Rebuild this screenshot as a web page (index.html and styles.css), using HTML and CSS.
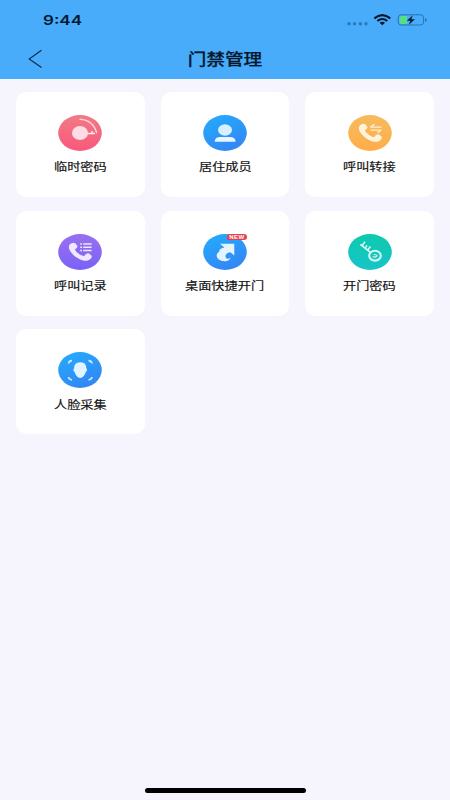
FILE: index.html
```html
<!DOCTYPE html>
<html lang="zh-CN">
<head>
<meta charset="utf-8">
<title>门禁管理</title>
<link rel="stylesheet" href="styles.css">
</head>
<body>
<div class="screen">
  <header class="header">
    <div class="status">
      <span class="time">9:44</span>
      <svg class="indicators" width="84" height="16" viewBox="0 0 84 16">
        <g fill="#2a78bb"><circle cx="4" cy="11.7" r="1.7"/><circle cx="9.6" cy="11.7" r="1.7"/><circle cx="15.4" cy="11.7" r="1.7"/><circle cx="21" cy="11.7" r="1.7"/></g>
        <g fill="none" stroke="#03182e" stroke-width="2.1"><path d="M29.3 6.4Q37.3-.2 45.3 6.4"/><path d="M32.3 9Q37.3 5 42.3 9"/></g>
        <path d="M34.6 10.7Q37.3 8.8 40 10.7L37.3 13.2Z" fill="#03182e"/>
        <rect x="53.2" y="2.8" width="25.4" height="10.2" rx="3" fill="none" stroke="#2874af"/>
        <path d="M56.5 4H62V12H56.5Q54.6 12 54.6 10V6Q54.6 4 56.5 4Z" fill="#55df82"/>
        <path d="M67.8 3.2L61.8 8.8H65.4L63.8 12.8L70 7.2H66.3Z" fill="#03182e"/>
        <path d="M80 6Q83.8 8 80 10Z" fill="#2874af"/>
      </svg>
    </div>
    <div class="navbar">
      <svg class="back" width="15" height="20" viewBox="0 0 15 20"><path d="M13.5 1.3L1.2 10L13.5 18.5" fill="none" stroke="#092b4c" stroke-width="1.1"/></svg>
      <h1 class="title">门禁管理</h1>
    </div>
  </header>
  <main class="grid">
    <section class="card">
      <svg class="icon" viewBox="0 0 44 36">
        <defs><linearGradient id="red" x1="0" y1="0" x2="0" y2="1"><stop offset="0" stop-color="#f27a84"/><stop offset="1" stop-color="#f8597c"/></linearGradient></defs>
        <ellipse cx="22" cy="18" rx="21.8" ry="17.9" fill="url(#red)"/>
        <path d="M22 4.2Q35 5 38.6 17.6" fill="none" stroke="#fbd3d8" stroke-width="1.5" stroke-linecap="round"/>
        <ellipse cx="22" cy="18" rx="8" ry="7" fill="#fbdce4"/>
        <path d="M29.5 18.4H37M34 18V16" stroke="#fff0f2" stroke-width="1.5"/>
      </svg>
      <span class="label">临时密码</span>
    </section>
    <section class="card">
      <svg class="icon" viewBox="0 0 44 36">
        <defs><linearGradient id="blue" x1="0" y1="0" x2=".5" y2="1"><stop offset="0" stop-color="#22adfd"/><stop offset="1" stop-color="#3388f4"/></linearGradient></defs>
        <ellipse cx="22" cy="18" rx="21.8" ry="17.9" fill="url(#blue)"/>
        <ellipse cx="22" cy="15" rx="7" ry="5.8" fill="#d8effe"/>
        <path d="M11.8 26.8C11.8 23.4 14 22 18 22H26C30.2 22 32.5 23.4 32.5 26.8Z" fill="#e8f5fe"/>
      </svg>
      <span class="label">居住成员</span>
    </section>
    <section class="card">
      <svg class="icon" viewBox="0 0 44 36">
        <defs><linearGradient id="orange" x1="0" y1="0" x2="0" y2="1"><stop offset="0" stop-color="#f6bb5e"/><stop offset="1" stop-color="#ffad49"/></linearGradient></defs>
        <ellipse cx="22" cy="18" rx="21.8" ry="17.9" fill="url(#orange)"/>
        <path d="M11.2 11.3C12.5 9 15.5 8 17.2 9.2L19.3 11.8Q20 13.5 16.9 15.3C18 18.5 22.5 21.3 26 22.2Q28.5 18.5 31 19.6L33.4 21.5C34.8 23 32.5 26.2 29 26.8C21.5 27.8 8.5 17.5 11.2 11.3Z" fill="#fff2da"/>
        <path d="M22 12.2H33.5M22.5 12L26.5 9.4M22.5 15.1H33.5M33 15.3L29.5 17.6" fill="none" stroke="#fff0d2" stroke-width="1.3"/>
      </svg>
      <span class="label">呼叫转接</span>
    </section>
    <section class="card">
      <svg class="icon" viewBox="0 0 44 36">
        <defs><linearGradient id="purple" x1="0" y1="0" x2="0" y2="1"><stop offset="0" stop-color="#9871ee"/><stop offset="1" stop-color="#7b61f8"/></linearGradient></defs>
        <ellipse cx="22" cy="18" rx="21.8" ry="17.9" fill="url(#purple)"/>
        <path d="M11.2 11.3C12.5 9 15.5 8 17.2 9.2L19.3 11.8Q20 13.5 16.9 15.3C18 18.5 22.5 21.3 26 22.2Q28.5 18.5 31 19.6L33.4 21.5C34.8 23 32.5 26.2 29 26.8C21.5 27.8 8.5 17.5 11.2 11.3Z" fill="#efe9ff"/>
        <path d="M22.2 10H24M25.2 10H33.6M22.2 13.2H24M25.2 13.2H33.6M22.2 16.4H24M25.2 16.4H33.6" stroke="#eee8ff" stroke-width="1.5"/>
      </svg>
      <span class="label">呼叫记录</span>
    </section>
    <section class="card">
      <div class="icon-wrap">
        <svg class="icon" viewBox="0 0 44 36">
          <ellipse cx="22" cy="18" rx="21.8" ry="17.9" fill="url(#blue)"/>
          <path d="M17 9.7H31.3V21.5L27.3 18.2C23 18.4 21.3 22.2 23.4 24.2C24.5 25.3 26.3 24.6 27.3 23.2C27.2 26 24.5 27.2 21.6 27.2C17 27.2 13.5 24.8 13.7 21.3C13.8 19.3 15.3 18.6 16.4 17.8C15.6 15.2 18.4 13.8 21.4 13.4Z" fill="#e3f4fe"/>
        </svg>
        <span class="badge">NEW</span>
      </div>
      <span class="label">桌面快捷开门</span>
    </section>
    <section class="card">
      <svg class="icon" viewBox="0 0 44 36">
        <defs><linearGradient id="teal" x1="0" y1="0" x2="0" y2="1"><stop offset="0" stop-color="#0dcaad"/><stop offset="1" stop-color="#18c4c8"/></linearGradient></defs>
        <ellipse cx="22" cy="18" rx="21.8" ry="17.9" fill="url(#teal)"/>
        <g fill="none" stroke="#d8faf5" stroke-width="1.9">
          <ellipse cx="27" cy="21.7" rx="5.8" ry="4.9" stroke-width="2.1"/>
          <path d="M12.3 10.4L22.7 18.7M14 11.8L17 7.8M17 14.2L19 11.4M19.6 16L22.5 12.4" stroke-width="1.6"/>
          <path d="M24.6 22.4Q27.2 24 29 21.8Q28 20.2 25.8 20.6" stroke-width="1.2"/>
        </g>
      </svg>
      <span class="label">开门密码</span>
    </section>
    <section class="card">
      <svg class="icon" viewBox="0 0 44 36">
        <ellipse cx="22" cy="18" rx="21.8" ry="17.9" fill="url(#blue)"/>
        <path d="M10.5 11.5Q10.8 9 14 8.7M30.5 8.7Q33.7 9 34 11.5M34 25Q33.7 27.6 30.5 27.8M14 27.8Q10.8 27.6 10.5 25" fill="none" stroke="#c8eaff" stroke-width="1.7"/>
        <path d="M22.3 10.2C26.8 10.2 28.4 13 28.2 16L29 17.2Q29 19.5 27.6 20.3C26.8 23.5 24.5 26 22.2 26S17.6 23.5 16.8 20.3Q15.3 19.5 15.4 17.2L16.2 16C16 13 17.8 10.2 22.3 10.2Z" fill="#e2f4ff"/>
      </svg>
      <span class="label">人脸采集</span>
    </section>
  </main>
  <div class="home-bar"></div>
</div>
</body>
</html>
```
FILE: styles.css
```css
* { box-sizing: border-box; }

body {
  margin: 0;
  font-family: "Liberation Sans", "Noto Sans CJK SC", sans-serif;
  color: #111;
}

.screen {
  display: flex;
  flex-direction: column;
  width: 450px;
  height: 800px;
  overflow: hidden;
  background: #f6f4fc;
}

.header {
  height: 79px;
  flex: none;
  background: #49acfb;
}

.status {
  display: flex;
  justify-content: space-between;
  align-items: center;
  height: 40px;
  padding: 0 21px 0 43px;
}

.time {
  font: 600 13px/16px Inter, sans-serif;
  color: #03182e;
  transform: scaleX(1.31);
  transform-origin: left;
}

.indicators { margin-top: -1px; }

.navbar {
  display: grid;
  grid-template-columns: 50px 1fr 50px;
  align-items: center;
  height: 38px;
}

.back { margin-left: 28px; }

.title {
  margin: 0 0 2px;
  font: 500 15.5px/24px "Noto Sans CJK SC", sans-serif;
  text-align: center;
  color: #03182e;
  -webkit-text-stroke: .25px #03182e;
  transform: scaleX(1.2);
}

.grid {
  display: grid;
  grid-template-columns: repeat(3, 128.5px);
  grid-auto-rows: 105px;
  gap: 13.7px 16.2px;
  padding: 13px 16px 0;
}

.card {
  display: flex;
  flex-direction: column;
  align-items: center;
  padding-top: 23px;
  border-radius: 10px;
  background: #fff;
}

.icon {
  display: block;
  flex: none;
  width: 44px;
  height: 36px;
}

.icon-wrap { position: relative; }

.badge {
  position: absolute;
  top: 0;
  right: 0;
  width: 20px;
  height: 6px;
  border-radius: 3px 3px 3px 0;
  background: #e9404d;
  color: #fff;
  font: 700 6px/6px "Liberation Sans", sans-serif;
  letter-spacing: .5px;
  text-align: center;
}

.label {
  margin-top: 6.4px;
  font: 400 11.2px/18px "Noto Sans CJK SC", sans-serif;
  white-space: nowrap;
  -webkit-text-stroke: .15px #111;
  transform: scaleX(1.18);
}

.home-bar {
  width: 161px;
  height: 5px;
  margin: auto auto 7px 144.5px;
  border-radius: 3px;
  background: #000;
}
```
